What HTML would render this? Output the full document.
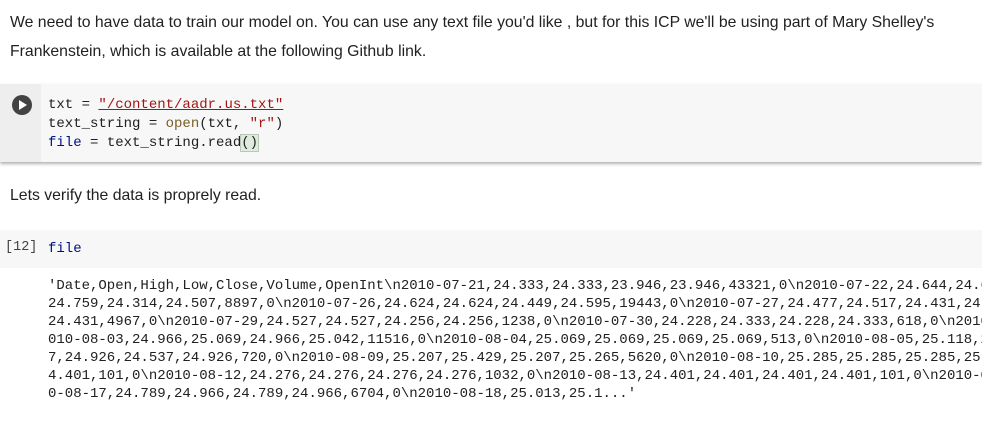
<!DOCTYPE html>
<html><head><meta charset="utf-8"><style>
html,body{margin:0;padding:0;width:982px;height:423px;overflow:hidden;background:#fff;}
body{font-family:"Liberation Sans",Arial,sans-serif;color:#212121;position:relative;}
.p{position:absolute;left:10px;font-size:15.8px;line-height:29px;white-space:nowrap;}
.mono{font-family:"Liberation Mono",monospace;font-size:14px;white-space:pre;}
.cell{position:absolute;left:0;width:982px;background:#f7f7f7;}
.gut{position:absolute;left:0;top:0;bottom:0;width:41px;background:#eeeeee;}
.line{position:absolute;left:48px;line-height:19px;}
.s{color:#a31515}.f{color:#795e26}.k{color:#001080}
</style></head><body>
<div class="p" style="top:8px">We need to have data to train our model on. You can use any text file you'd like , but for this ICP we'll be using part of Mary Shelley's<br>Frankenstein, which is available at the following Github link.</div>

<div class="cell" style="top:84px;height:78px;box-shadow:0 2px 3px rgba(0,0,0,.3);">
 <div class="gut"></div>
 <div style="position:absolute;left:12px;top:11px;width:20px;height:20px;border-radius:50%;background:#424242;"></div>
 <div style="position:absolute;left:19px;top:16px;width:0;height:0;border-left:8px solid #fff;border-top:5px solid transparent;border-bottom:5px solid transparent;"></div>
 <div class="line mono" style="top:12px">txt = <span class="s" style="text-decoration:underline">"/content/aadr.us.txt"</span></div>
 <div class="line mono" style="top:31px">text_string = <span class="f">open</span>(txt, <span class="s">"r"</span>)</div>
 <div class="line mono" style="top:50px"><span class="k">file</span> = text_string.read<span style="background:#e0ebe0;outline:1px solid #b8c8b8">()</span></div>
</div>

<div class="p" style="top:181px">Lets verify the data is proprely read.</div>

<div class="cell" style="top:230px;height:38px;">
 <div class="mono" style="position:absolute;left:5px;top:10px;color:#424242;font-size:13.5px">[12]</div>
 <div class="line mono k" style="top:10px">file</div>
</div>

<div class="mono" style="position:absolute;left:48px;top:277px;width:934px;overflow:hidden;line-height:18px;color:#212121">'Date,Open,High,Low,Close,Volume,OpenInt\n2010-07-21,24.333,24.333,23.946,23.946,43321,0\n2010-07-22,24.644,24.644,24.
24.759,24.314,24.507,8897,0\n2010-07-26,24.624,24.624,24.449,24.595,19443,0\n2010-07-27,24.477,24.517,24.431,24.4
24.431,4967,0\n2010-07-29,24.527,24.527,24.256,24.256,1238,0\n2010-07-30,24.228,24.333,24.228,24.333,618,0\n2010-0
010-08-03,24.966,25.069,24.966,25.042,11516,0\n2010-08-04,25.069,25.069,25.069,25.069,513,0\n2010-08-05,25.118,25
7,24.926,24.537,24.926,720,0\n2010-08-09,25.207,25.429,25.207,25.265,5620,0\n2010-08-10,25.285,25.285,25.285,25.2
4.401,101,0\n2010-08-12,24.276,24.276,24.276,24.276,1032,0\n2010-08-13,24.401,24.401,24.401,24.401,101,0\n2010-08
0-08-17,24.789,24.966,24.789,24.966,6704,0\n2010-08-18,25.013,25.1...'</div>
</body></html>
